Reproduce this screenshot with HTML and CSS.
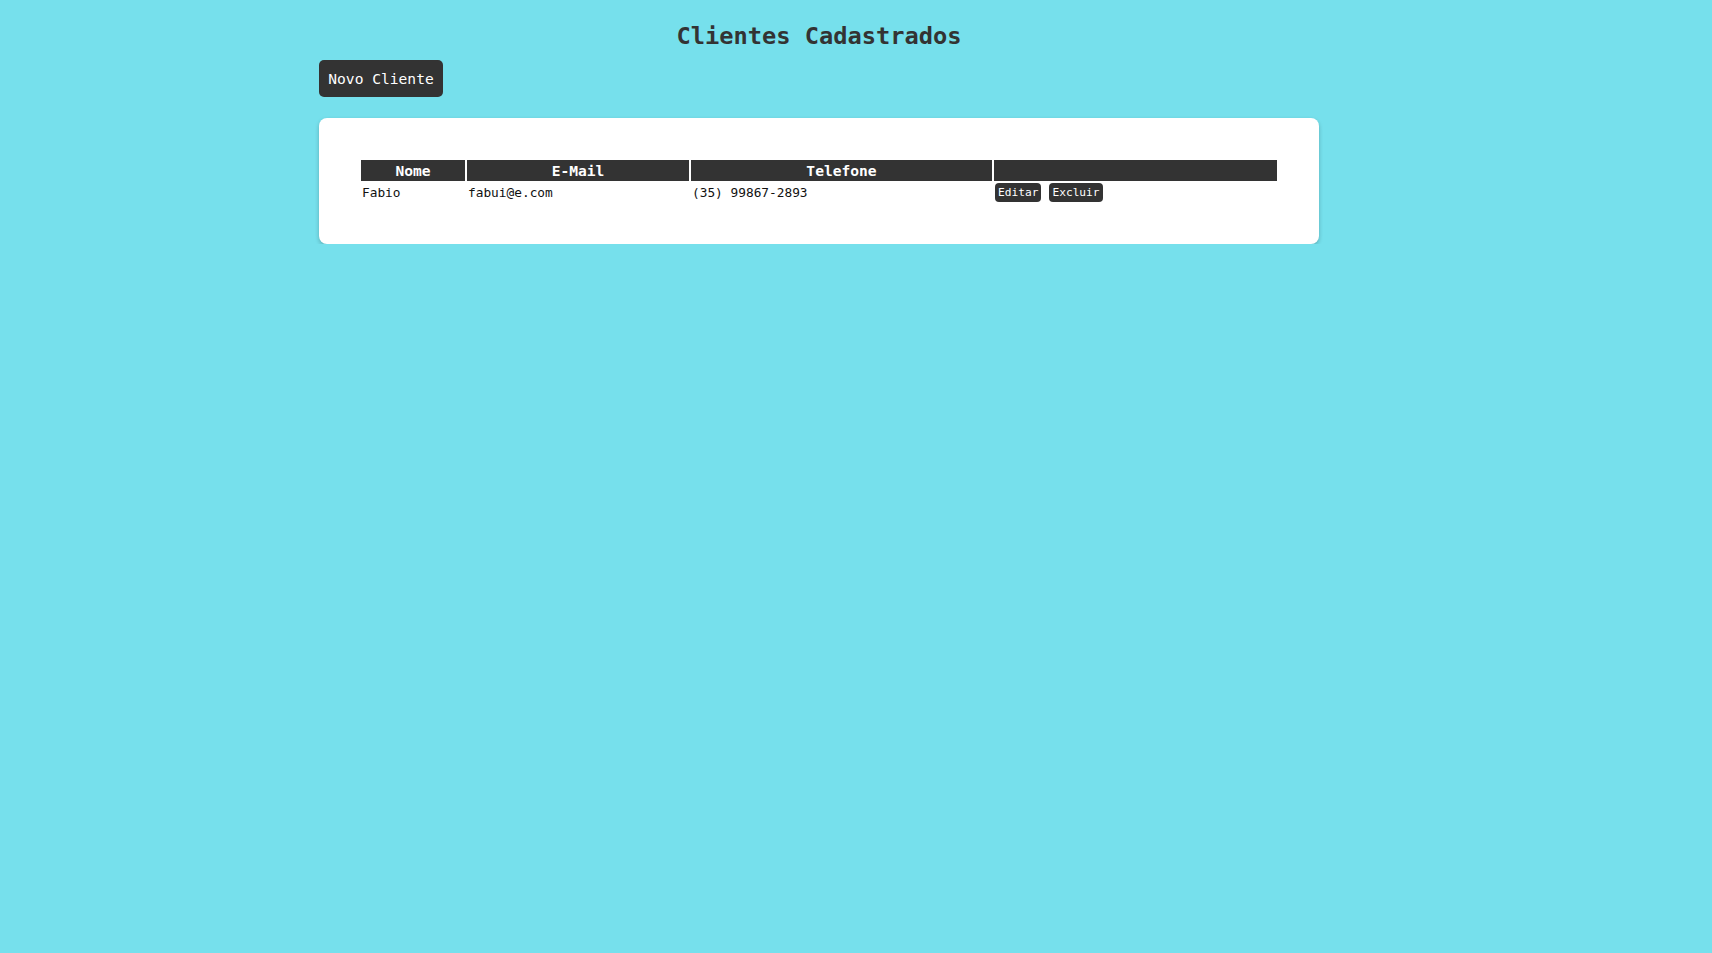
FILE: index.html
```html
<!DOCTYPE html>
<html lang="pt-BR">
<head>
<meta charset="utf-8">
<title>Clientes Cadastrados</title>
<link rel="stylesheet" href="styles.css">
</head>
<body>
<div class="container">
  <h1 class="title">Clientes Cadastrados</h1>
  <button class="btn-new" type="button">Novo Cliente</button>
  <div class="card">
    <table class="clients">
      <thead>
        <tr>
          <th class="col-nome">Nome</th>
          <th class="col-email">E-Mail</th>
          <th class="col-tel">Telefone</th>
          <th class="col-acoes"></th>
        </tr>
      </thead>
      <tbody>
        <tr>
          <td>Fabio</td>
          <td>fabui@e.com</td>
          <td>(35) 99867-2893</td>
          <td class="actions"><button class="btn-small" type="button">Editar</button><button class="btn-small" type="button">Excluir</button></td>
        </tr>
      </tbody>
    </table>
  </div>
</div>
</body>
</html>
```

FILE: styles.css
```css
html, body {
  margin: 0;
  padding: 0;
  background: #76e0ec;
  font-family: "DejaVu Sans Mono", "Liberation Mono", monospace;
  color: #333333;
}

.container {
  width: 1000px;
  margin-left: 319px;
  padding-top: 20px;
  display: flex;
  flex-direction: column;
  align-items: flex-start;
}

.title {
  align-self: stretch;
  text-align: center;
  font-size: 23.7px;
  font-weight: bold;
  line-height: 32px;
  margin: 0 0 8px 0;
  color: #333333;
}

.btn-new {
  background: #333333;
  color: #ffffff;
  border: none;
  border-radius: 5px;
  font-family: "DejaVu Sans Mono", "Liberation Mono", monospace;
  font-size: 14.6px;
  line-height: 19px;
  height: 37px;
  width: 124px;
  padding: 0;
  margin: 0 0 21px 0;
  cursor: pointer;
}

.card {
  align-self: stretch;
  background: #ffffff;
  border-radius: 8px;
  padding: 40px;
  box-shadow: 0 2px 4px rgba(0, 0, 0, 0.22);
}

.clients {
  width: 100%;
  table-layout: fixed;
  border-collapse: separate;
  border-spacing: 2px;
  color: #111111;
}

.clients th {
  background: #333333;
  color: #ffffff;
  font-weight: bold;
  font-size: 14.6px;
  line-height: 19px;
  padding: 1px;
  text-align: center;
  box-sizing: border-box;
}

.col-nome { width: 104px; }
.col-email { width: 222px; }
.col-tel { width: 301px; }

.clients td {
  font-size: 12.8px;
  line-height: 17px;
  padding: 1px;
  text-align: left;
  vertical-align: middle;
}

.clients td.actions {
  padding: 0 1px;
}

.actions {
  white-space: nowrap;
}

.btn-small {
  background: #333333;
  color: #ffffff;
  border: none;
  border-radius: 4px;
  font-family: "DejaVu Sans Mono", "Liberation Mono", monospace;
  font-size: 11.2px;
  font-weight: 500;
  line-height: 15px;
  padding: 2px 3px;
  margin: 0 8px 0 0;
  vertical-align: middle;
  cursor: pointer;
}
```
